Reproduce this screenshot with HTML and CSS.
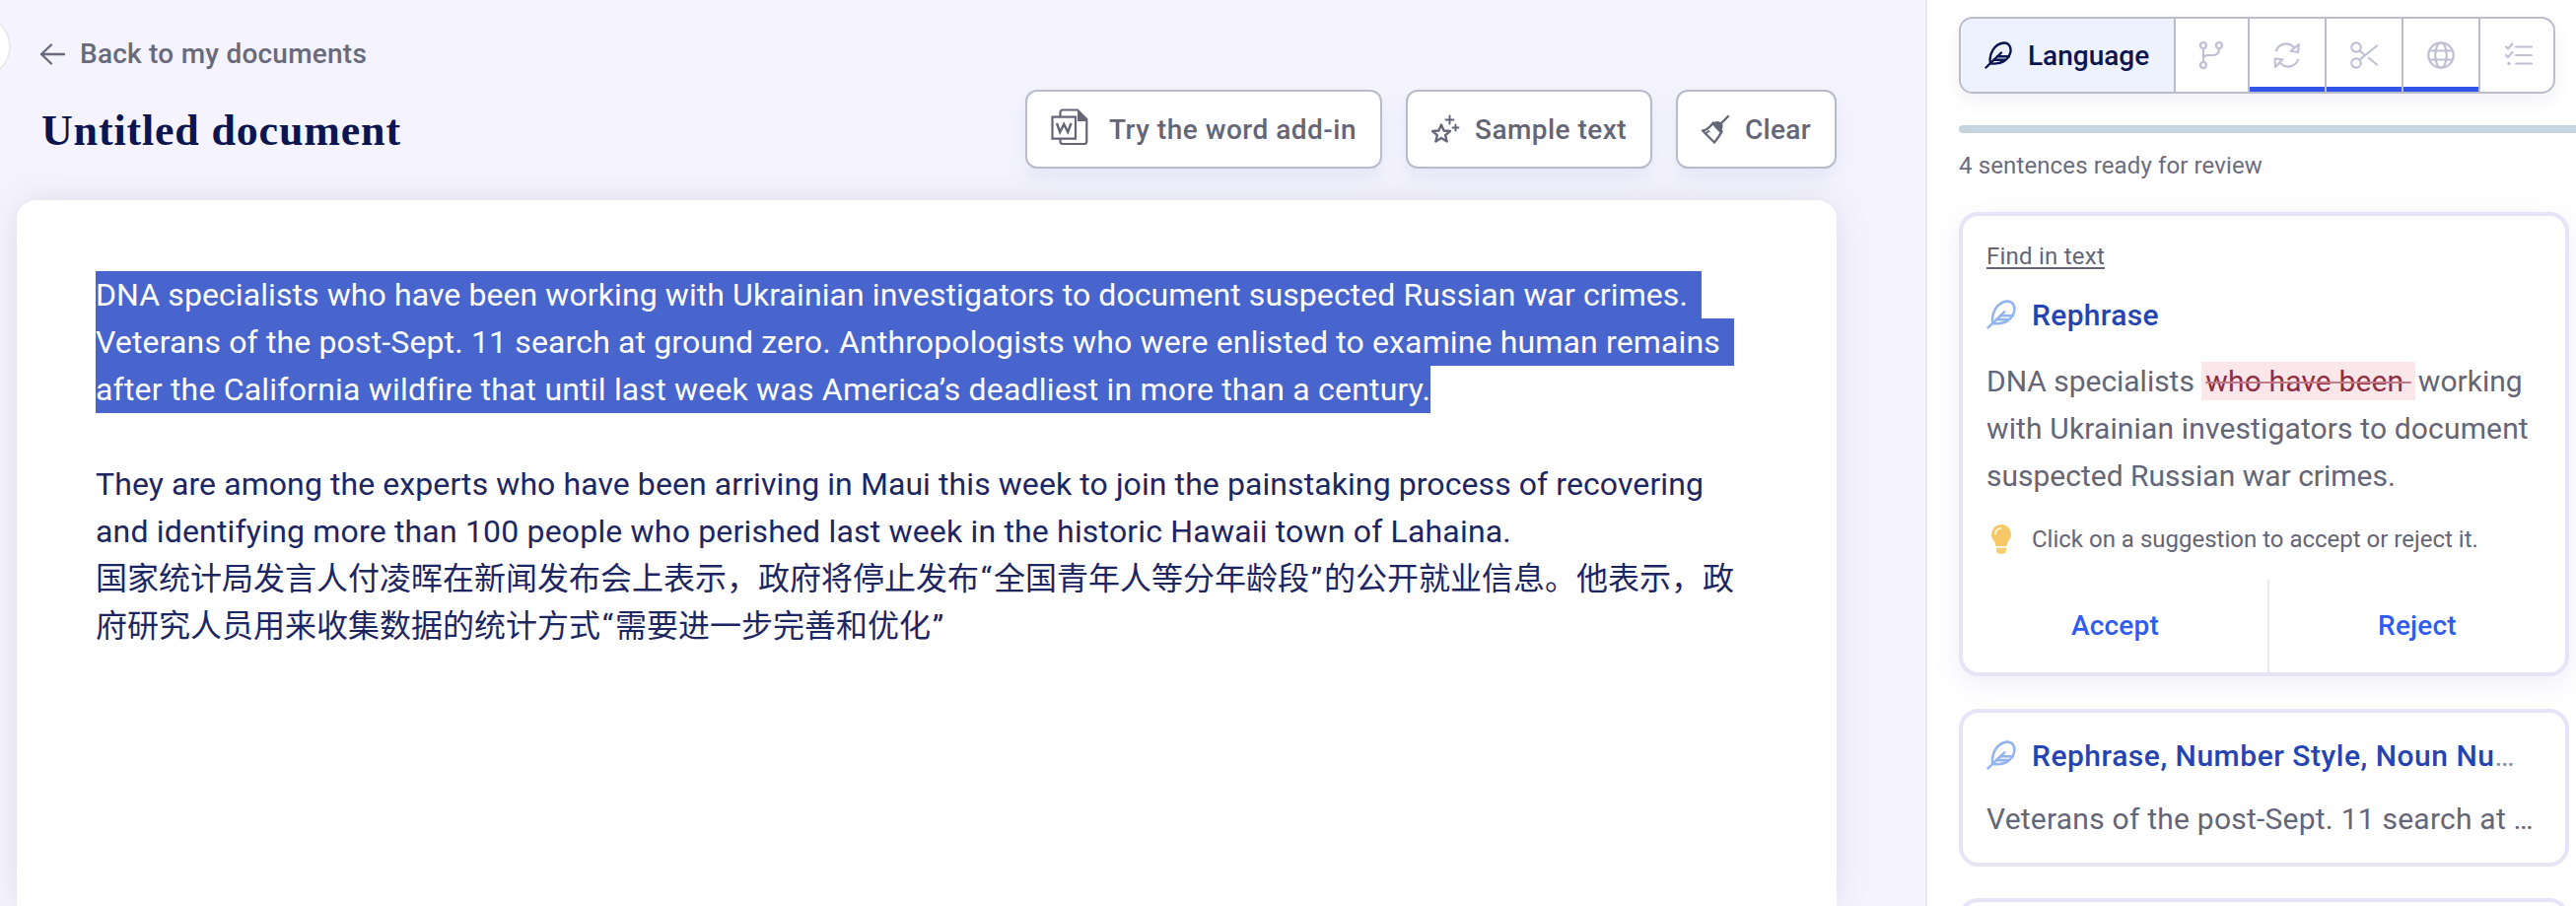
FILE: index.html
```html
<!DOCTYPE html>
<html lang="en">
<head>
<meta charset="utf-8">
<title>Untitled document</title>
<link rel="stylesheet" href="styles.css">
</head>
<body>
<svg class="defs" width="0" height="0" aria-hidden="true">
  <symbol id="feather" viewBox="0 0 28 28"><g fill="none" stroke="currentColor" stroke-width="2.4" stroke-linecap="round" stroke-linejoin="round"><path d="M1.5 26.500 17 11.500"/><path d="M6 22.300C4 13 10 2.500 19.500 1.500C25 1.300 27.300 6 26.300 11C24.500 18.500 17 24 6 22.300Z"/><path d="M13 15.200H25M9.500 18.800H20.500"/></g></symbol>
</svg>
<main class="main">
  <span class="knob"></span>
  <a class="back"><svg class="back-icon" viewBox="0 0 26 22"><path d="M25 11H2M12 1.500 2 11l10 9.500" fill="none" stroke="currentColor" stroke-width="2.400" stroke-linecap="round" stroke-linejoin="round"/></svg><span>Back to my documents</span></a>
  <div class="heading">
    <h1 class="title">Untitled document</h1>
    <div class="buttons">
      <button class="btn btn-word"><svg class="i-word" viewBox="0 0 38 38"><path d="M9.500 8V4A2.500 2.500 0 0 1 12 1.500H27L36.300 11v22.500a2.500 2.500 0 0 1-2.500 2.500H12a2.500 2.500 0 0 1-2.500-2.500V31" fill="none" stroke="currentColor" stroke-width="2.200"/><path d="M27 1.500V13h9.800z" fill="currentColor"/><path d="M1.500 8.700h23.500v22H1.500z" fill="#fff" stroke="currentColor" stroke-width="2.200"/><path d="m6 15 3.200 9 4-8 4 8 3.300-9" fill="none" stroke="currentColor" stroke-width="2.400"/></svg><span>Try the word add-in</span></button>
      <button class="btn btn-sample"><svg class="i30" viewBox="0 0 30 30"><g fill="none" stroke="currentColor" stroke-width="2.300" stroke-linejoin="round"><path d="m11 10.500 2.600 6 6.400.500-4.900 4.100 1.600 6.400-5.700-3.500-5.700 3.500 1.600-6.400L2 17l6.400-.500z"/><path d="M19.500 1.500v8M15.500 5.500h8M25.500 10.500v6M22.500 13.500h6" stroke-width="1.900" stroke-linecap="round"/></g></svg><span>Sample text</span></button>
      <button class="btn btn-clear"><svg class="i30" viewBox="0 0 30 30"><path d="m28 2-7.500 7.500" stroke="currentColor" stroke-width="2.400" stroke-linecap="round"/><path d="M2 16.500C7.500 16 9.500 12 13 8.500L21.500 17C20 21 17.500 24 14 28.500Z" fill="none" stroke="currentColor" stroke-width="2.300" stroke-linejoin="round"/><path d="m11.500 10 3-2.500q4-1.500 6.500 1t1 6l-2.500 4z" fill="currentColor"/><path d="m5.500 19 3.500-2.500" stroke="currentColor" stroke-width="1.800"/></svg><span>Clear</span></button>
    </div>
  </div>
  <section class="editor">
    <p class="selected"><span class="sel l1">DNA specialists who have been working with Ukrainian investigators to document suspected Russian war crimes.</span><br><span class="sel l2">Veterans of the post-Sept. 11 search at ground zero. Anthropologists who were enlisted to examine human remains</span><br><span class="sel l3">after the California wildfire that until last week was America’s deadliest in more than a century.</span></p>
    <p><span class="l4">They are among the experts who have been arriving in Maui this week to join the painstaking process of recovering</span><br><span class="l5">and identifying more than 100 people who perished last week in the historic Hawaii town of Lahaina.</span><br><span lang="zh-Hans">国家统计局发言人付凌晖在新闻发布会上表示，政府将停止发布<span class="q">“</span>全国青年人等分年龄段<span class="q">”</span>的公开就业信息。他表示，政</span><br><span lang="zh-Hans">府研究人员用来收集数据的统计方式<span class="q">“</span>需要进一步完善和优化<span class="q">”</span></span></p>
  </section>
</main>
<aside class="side">
  <nav class="tabs">
    <button class="tab tab-active"><svg class="i28"><use href="#feather"/></svg><span>Language</span></button>
    <button class="tab tab-branch"><svg class="i28" viewBox="0 0 28 28"><g fill="none" stroke="currentColor" stroke-width="2.200"><circle cx="6" cy="4" r="3"/><circle cx="22" cy="4" r="3"/><circle cx="6" cy="24" r="3"/><path d="M6 7v14M22 7c0 5-2 7-6 7h-5c-3 0-5 1.500-5 4"/></g></svg></button>
    <button class="tab tab-marked"><svg class="i28" viewBox="0 0 28 28"><g fill="none" stroke="currentColor" stroke-width="2.100" stroke-linejoin="round"><path d="M2.500 10C5 3 14-.500 20.500 5.500L22 7M26 3l-1 8-7.500-1.200zM25.500 18C23 25 14 28.500 7.500 22.500L6 21M2 26l-.5-8.500 8 .8z"/></g></svg></button>
    <button class="tab tab-marked"><svg class="i28" viewBox="0 0 28 28"><g fill="none" stroke="currentColor" stroke-width="2.200" stroke-linecap="round"><circle cx="6" cy="6" r="4.700"/><circle cx="6" cy="22" r="4.700"/><path d="M27 4.500 9.500 18.500M9.500 9.500l5 4M19 17l8 6.500"/></g></svg></button>
    <button class="tab tab-marked"><svg class="i28" viewBox="0 0 28 28"><g fill="none" stroke="currentColor" stroke-width="2.200"><circle cx="14" cy="14" r="12.700"/><ellipse cx="14" cy="14" rx="5.800" ry="12.700"/><path d="M2.500 9.500h23M2.500 18.500h23"/></g></svg></button>
    <button class="tab tab-list"><svg class="i28" viewBox="0 0 28 28"><g fill="none" stroke="currentColor" stroke-width="2.200" stroke-linecap="round" stroke-linejoin="round"><path d="M11 5.500h16M11 14h16M11 22.500h16M1 5.500l2 2 4.500-5M1 14l2 2 4.500-5"/></g><circle cx="4" cy="22.500" r="1.700" fill="currentColor"/></svg></button>
  </nav>
  <div class="progress"></div>
  <p class="status">4 sentences ready for review</p>
  <article class="card card-open">
    <a class="find">Find in text</a>
    <h2 class="kind"><svg><use href="#feather"/></svg><span class="kind-name">Rephrase</span></h2>
    <p class="sentence"><span class="s1">DNA specialists</span> <del>who have been&nbsp;</del><span class="s2">working</span><br><span class="s3">with Ukrainian investigators to document</span><br>suspected Russian war crimes.</p>
    <p class="tip"><svg viewBox="0 0 20 30"><path d="M10 0a10 10 0 0 0-10 10c0 4 2 5.500 3.500 8L4.500 22h11l1-4c1.500-2.500 3.500-4 3.500-8A10 10 0 0 0 10 0Z" fill="#f5c765"/><path d="M4 9.500Q4.500 4.500 9.500 4" fill="none" stroke="#fff3cd" stroke-width="2" stroke-linecap="round"/><path d="M5 23.500h10v2.500q0 4-5 4t-5-4z" fill="#f5cf70"/></svg><span>Click on a suggestion to accept or reject it.</span></p>
    <div class="actions"><button class="action accept">Accept</button><button class="action reject">Reject</button></div>
  </article>
  <article class="card card-closed">
    <h2 class="kind"><svg><use href="#feather"/></svg><span class="kind-list">Rephrase, Number Style, Noun Nu<span class="dots">…</span></span></h2>
    <p class="preview">Veterans of the post-Sept. 11 search at …</p>
  </article>
  <article class="card card-closed card-next"></article>
</aside>
</body>
</html>
```
FILE: styles.css
```css
* { box-sizing: border-box; margin: 0; padding: 0; }
body {
  display: flex;
  height: 919px;
  overflow: hidden;
  font-family: Roboto, "Noto Sans CJK SC", sans-serif;
  background: #f5f4fe;
  color: #646576;
  white-space: nowrap;
}
button { font: inherit; color: inherit; background: none; border: 0; white-space: nowrap; }
svg { flex: none; display: block; }
.defs { position: absolute; }
.i28 { width: 28px; height: 28px; }
.i30 { width: 30px; height: 30px; }

/* Document column */
.main {
  position: relative;
  flex: none;
  display: flex;
  flex-direction: column;
  width: 1953px;
  padding: 30px 90px 0 17px;
}
.knob {
  position: absolute;
  left: -53px;
  top: 15px;
  width: 64px;
  height: 64px;
  border: 2px solid #eae9f2;
  border-radius: 50%;
  background: #fff;
}
.back {
  display: flex;
  align-items: center;
  gap: 15px;
  height: 48px;
  padding: 1px 0 0 23px;
  font-size: 28px;
  line-height: 48px;
  letter-spacing: .23px;
  font-weight: 500;
  color: #696a7c;
}
.back-icon { width: 26px; height: 22px; }
.heading {
  display: flex;
  justify-content: space-between;
  align-items: center;
  height: 80px;
  margin: 13px 0 32px;
}
.title {
  padding: 3px 0 0 25px;
  font: bold 44px/50px "Liberation Serif", serif;
  letter-spacing: .83px;
  color: #0b1550;
}
.buttons { display: flex; gap: 24px; }
.btn {
  display: flex;
  align-items: center;
  height: 80px;
  border: 2px solid #b9bacb;
  border-radius: 12px;
  background: #fff;
  box-shadow: 0 8px 20px rgba(90, 100, 180, .1);
  font-size: 28px;
  font-weight: 500;
}
.btn-word { width: 362px; padding-left: 24px; gap: 21px; letter-spacing: .49px; }
.i-word { width: 38px; height: 38px; margin-top: -4px; }
.btn-sample { width: 250px; padding-left: 23px; gap: 15px; letter-spacing: .45px; }
.btn-clear { width: 163px; padding-left: 23px; gap: 15px; letter-spacing: .32px; }
.editor {
  flex: 1;
  padding: 72px 80px 0;
  border-radius: 20px 20px 0 0;
  background: #fff;
  box-shadow: 0 0 36px rgba(60, 60, 110, .13);
  font-size: 32px;
  line-height: 48px;
  color: #1c2662;
}
.selected { margin-bottom: 48px; color: #fff; }
.sel { display: inline-block; height: 48px; padding-top: 1px; line-height: 47px; vertical-align: top; background: #4765cd; }
.l1 { padding-right: 14px; letter-spacing: .089px; }
.l2 { padding-right: 14px; letter-spacing: .145px; }
.l3 { letter-spacing: .198px; }
.l4 { letter-spacing: .082px; }
.l5 { letter-spacing: .178px; }
.q { margin: 0 1.8px; }

/* Review column */
.side {
  flex: none;
  width: 660px;
  height: 919px;
  overflow: hidden;
  padding: 17px 7px 0 32px;
  border-left: 2px solid #e9e8f2;
  background: #fff;
}
.tabs {
  display: flex;
  width: 605px;
  height: 78px;
  border: 2px solid #bcbccf;
  border-radius: 14px;
  overflow: hidden;
  box-shadow: 0 8px 20px rgba(40, 40, 80, .06);
}
.tab {
  display: flex;
  align-items: center;
  justify-content: center;
  flex: none;
  width: 78px;
  border-right: 2px solid #bcbccf;
  color: #bfbfd6;
}
.tab-active {
  width: 218px;
  justify-content: flex-start;
  padding-left: 24px;
  gap: 16px;
  background: #eef2fe;
  color: #0b1550;
  font-size: 28px;
  font-weight: 500;
}
.tab-branch { width: 74px; }
.tab-marked { box-shadow: inset 0 -5px #3354e8; }
.tab-branch { padding-right: 2px; width: 75px; }
.tab-list { border-right: 0; }
.progress {
  height: 8px;
  margin: 32px -7px 0 0;
  border-radius: 4px 0 0 4px;
  background: #c6d4e0;
}
.status { margin: 15px 0 29px; font-size: 24px; line-height: 36px; letter-spacing: .12px; color: #6b6c7d; }
.card {
  width: 619px;
  border: 4px solid #e6e4f6;
  border-radius: 20px;
  background: #fff;
}
.card-open {
  height: 471px;
  padding-top: 23px;
  box-shadow: 0 8px 28px rgba(80, 70, 170, .09);
}
.find {
  display: block;
  margin-left: 24px;
  font-size: 24px;
  line-height: 36px;
  letter-spacing: .23px;
  text-decoration: underline;
  text-decoration-thickness: 2px;
  text-underline-offset: 3px;
}
.kind {
  display: flex;
  align-items: center;
  gap: 16px;
  height: 40px;
  margin: 21px 0 24px 24px;
  font-size: 30px;
  font-weight: 500;
  color: #2544b4;
}
.kind svg { width: 30px; height: 30px; color: #94b4ee; }
.kind-name { letter-spacing: .34px; }
.kind-list { letter-spacing: .52px; }
.dots { font-weight: 400; color: #8a8b98; }
.sentence, .preview { margin-left: 24px; font-size: 30px; line-height: 48px; }
.s1 { letter-spacing: -.03px; }
.s3 { letter-spacing: .14px; }
del {
  display: inline-block;
  height: 39px;
  padding: 0 4px;
  line-height: 39px;
  vertical-align: baseline;
  background: #fbe6ea;
  color: #8d2f40;
  letter-spacing: .14px;
  text-decoration: line-through 2px #c47a88;
}
.s2 { margin-left: 3px; }
.tip {
  display: flex;
  align-items: center;
  gap: 21px;
  height: 36px;
  margin: 22px 0 23px 29px;
  font-size: 24px;
}
.tip svg { width: 20px; height: 30px; }
.actions { display: flex; height: 94px; }
.action {
  padding-bottom: 1px;
  font-size: 28px;
  font-weight: 500;
  letter-spacing: .2px;
  color: #2f5cf0;
}
.accept { width: 309px; }
.reject { flex: 1; border-left: 2px solid #e9e8f2; }
.card-closed { height: 160px; margin-top: 33px; padding-top: 23px; }
.card-closed .kind { margin: 0 0 21px 24px; }
.preview { letter-spacing: .23px; }
.card-next { margin-top: 32px; }
```
